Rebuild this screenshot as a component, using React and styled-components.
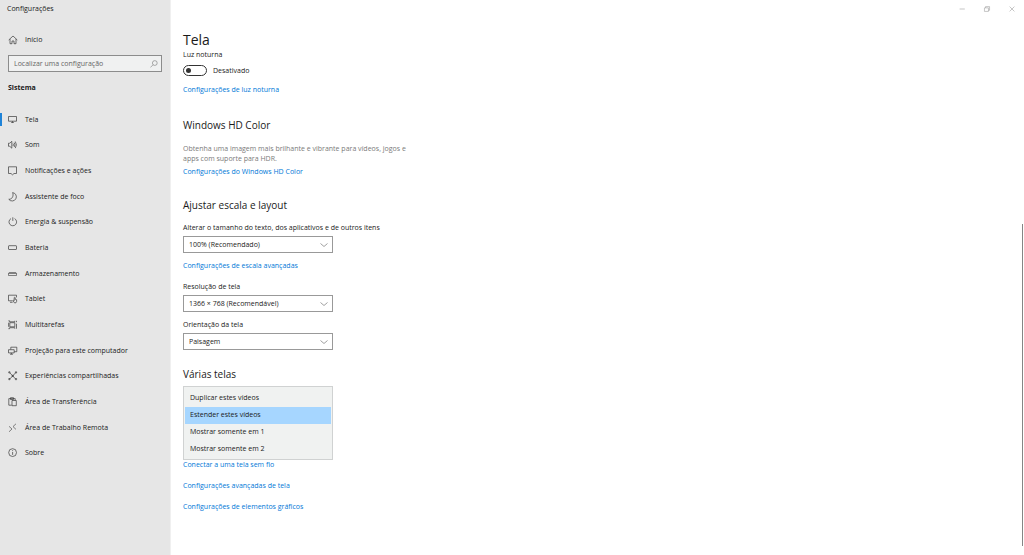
import styled, { createGlobalStyle } from 'styled-components'

const GlobalStyle = createGlobalStyle`
  * {
    box-sizing: border-box;
  }
  body {
    margin: 0;
    background: #fff;
    color: #1a1a1a;
    font-family: 'Open Sans', 'Noto Sans', sans-serif;
    font-size: 7px;
    line-height: 10px;
  }
  button,
  input,
  select {
    font: inherit;
    color: inherit;
    border-radius: 0;
  }
  h1,
  h2,
  p,
  ul {
    margin: 0;
    padding: 0;
    font-weight: 400;
  }
`

const Window = styled.div`
  display: flex;
  min-height: 100vh;
`

const Sidebar = styled.aside`
  flex: 0 0 171px;
  background: #e6e6e6;
  border-right: 1px solid #f0f0f0;
`

const AppName = styled.div`
  padding: 4px 7px;
`

const SidebarLink = styled.a`
  display: flex;
  align-items: center;
  gap: 7px;
  padding-left: 6px;
  border-left: 2px solid ${({ $active }) => ($active ? '#1f83d8' : 'transparent')};
  height: 13px;
  color: inherit;
  text-decoration: none;
  svg {
    flex: none;
    color: #3a3a3a;
  }
`

const HomeRow = styled.div`
  padding: 15px 0 9px;
`

const SearchBox = styled.label`
  display: flex;
  align-items: center;
  height: 17px;
  margin: 0 8px;
  padding: 0 3px 0 5px;
  border: 1px solid #8c8c8c;
  background: #f0f1f1;
  color: #707070;
  input {
    flex: 1;
    min-width: 0;
    padding: 0;
    border: none;
    outline: none;
    background: transparent;
  }
  input::placeholder {
    color: #666;
    opacity: 1;
  }
`

const GroupName = styled.div`
  padding: 11px 8px 14px;
  font-weight: 700;
`

const NavList = styled.ul`
  display: grid;
  grid-auto-rows: 1fr;
  align-items: center;
  height: 359px;
  list-style: none;
`

const Page = styled.div`
  flex: 1;
  display: flex;
  flex-direction: column;
`

const TitleBar = styled.header`
  display: flex;
  justify-content: flex-end;
  height: 18px;
`

const WindowButton = styled.button`
  display: flex;
  align-items: center;
  justify-content: center;
  width: 25px;
  padding: 0;
  border: none;
  background: transparent;
  color: #999;
`

const Body = styled.div`
  flex: 1;
  display: flex;
`

const Main = styled.main`
  flex: 1;
  padding: 11px 12px 20px;
`

const ScrollTrack = styled.div`
  display: flex;
  width: 2px;
  padding: 206px 1px 9px 0;
`

const ScrollThumb = styled.div`
  flex: 1;
  background: #858585;
`

const Title = styled.h1`
  font-size: 14px;
  line-height: 21px;
`

const Section = styled.section`
  display: flex;
  flex-direction: column;
  align-items: flex-start;
  margin-bottom: ${({ $gap }) => $gap || 0}px;
`

const Heading = styled.h2`
  margin-bottom: ${({ $gap }) => $gap}px;
  font-size: 10px;
  line-height: 15px;
`

const Description = styled.p`
  max-width: 230px;
  margin-bottom: 3px;
  color: #7a7a7a;
`

const Link = styled.a`
  color: #0078d7;
  text-decoration: none;
`

const ToggleRow = styled.label`
  display: flex;
  align-items: center;
  gap: 6px;
  margin: 5px 0 9px;
  height: 11px;
`

const Toggle = styled.input`
  appearance: none;
  display: flex;
  align-items: center;
  width: 24px;
  height: 11px;
  margin: 0;
  padding: 0 2px;
  border: 1px solid #333;
  border-radius: 6px;
  &::before {
    content: '';
    width: 5px;
    height: 5px;
    border-radius: 50%;
    background: #333;
  }
  &:checked {
    justify-content: flex-end;
  }
`

const Field = styled.div`
  display: flex;
  flex-direction: column;
  gap: 3px;
  margin-bottom: 8px;
`

const SelectBox = styled.div`
  display: grid;
  grid-template-columns: 1fr 14px;
  align-items: center;
  width: 150px;
  height: 17px;
  select {
    grid-area: 1 / 1 / 2 / 3;
    appearance: none;
    height: 17px;
    padding: 0 16px 0 5px;
    border: 1px solid #999;
    background: #fff;
    outline: none;
  }
  svg {
    grid-area: 1 / 2 / 2 / 3;
    pointer-events: none;
  }
`

const OptionList = styled.select`
  width: 150px;
  height: 74px;
  padding: 3px 1px;
  border: 1px solid #d0d2d2;
  background: #f0f2f1;
  outline: none;
  overflow: hidden;
  scrollbar-width: none;
  option {
    min-height: 17px;
    padding: 3px 5px 4px;
    line-height: 10px;
    color: #1a1a1a;
  }
  option:checked {
    background: #a6d6ff linear-gradient(#a6d6ff, #a6d6ff);
    color: #1a1a1a;
  }
`

const LinkStack = styled.div`
  display: flex;
  flex-direction: column;
  align-items: flex-start;
  gap: 11px;
`

const Icon = ({ children, size = 10 }) => (
  <svg
    width={size}
    height={size}
    viewBox="0 0 10 10"
    fill="none"
    stroke="currentColor"
    strokeWidth="0.7"
    aria-hidden="true"
  >
    {children}
  </svg>
)

const Chevron = () => (
  <Icon>
    <path d="M1.5 3.5 5 6.5 8.5 3.5" stroke="#777" />
  </Icon>
)

const navItems = [
  {
    label: 'Tela',
    active: true,
    icon: <path d="M.5 1.5h8v4.7h-8zM4.5 6.2v1.3M3.2 7.5h2.6" />,
  },
  {
    label: 'Som',
    icon: (
      <path d="M.5 3.2h1.3L3.8 1.3v6.9L1.8 6.3H.5zM5 3.6q.8 1.2 0 2.4M6.2 2.6q1.5 2.2 0 4.4M7.3 1.5q2.2 3.3 0 6.6" />
    ),
  },
  { label: 'Notificações e ações', icon: <path d="M.5.8h8v6.7H6L4.5 8.8 3 7.5H.5z" /> },
  {
    label: 'Assistente de foco',
    icon: <path d="M4.6.6A4.2 4.2 0 1 1 .8 7.3C4 7.5 6 4 4.6.6z" />,
  },
  {
    label: 'Energia & suspensão',
    icon: <path d="M3 1.6A3.8 3.8 0 1 0 6.6 1.6M4.8.3v3.6" />,
  },
  { label: 'Bateria', icon: <rect x=".5" y="2.7" width="8" height="3.8" rx=".5" /> },
  { label: 'Armazenamento', icon: <path d="M1.2 3.5h6.6l.7.9v2.1h-8V4.4zM.5 4.5h8" strokeWidth="0.6" /> },
  {
    label: 'Tablet',
    icon: (
      <path d="M4.3 6.8H.5V1.2h8v2.2M2 8.3h2.6M6.2 6.8V3.6q.5-.6 1 0v1.7l1.4.4v1.8l-.7 1.3H6.4L4.8 6.6q.5-.7 1.4.2" />
    ),
  },
  {
    label: 'Multitarefas',
    icon: <path d="M1.8 2.7h5v4.1h-5zM.4.8h1.2v1h5.2v-1M.4 8.7h1.2v-1h5.2v1M.4 2.7v4.1M8.5.8v1.4M8.5 3.7v5" />,
  },
  {
    label: 'Projeção para este computador',
    icon: <path d="M2.8 3.5V1.2h6v4.5H6.2M.5 3.7h5.7v3.2H.5zM2 8.2h3M3.4 6.9v1.3" />,
  },
  {
    label: 'Experiências compartilhadas',
    icon: (
      <path d="M2 2 7.4 7.8M7.4 2 2 7.8M.8.8H2V2H.8zM7.4.8h1.2V2H7.4zM.8 7.5H2v1.2H.8zM7.4 7.5h1.2v1.2H7.4zM4.1 4.3h1.2v1.2H4.1z" />
    ),
  },
  {
    label: 'Área de Transferência',
    icon: <path d="M3.7 8.2H.8V1.6h6.4v1.7M2.5 2.5V.7h3v1.8zM4 3.5h4.3v5.2H4z" />,
  },
  {
    label: 'Área de Trabalho Remota',
    icon: <path d="M1 3.3 4 6 1 8.8M8 .8 5 3.6 8 6.4" strokeWidth="0.6" />,
  },
  {
    label: 'Sobre',
    icon: (
      <>
        <circle cx="4.6" cy="4.6" r="3.9" />
        <path d="M4.6 4v2.9M4.6 2.2v.9" />
      </>
    ),
  },
]

const SelectField = ({ id, label, value }) => (
  <Field>
    <label htmlFor={id}>{label}</label>
    <SelectBox>
      <select id={id} defaultValue={value}>
        <option>{value}</option>
      </select>
      <Chevron />
    </SelectBox>
  </Field>
)

const App = () => (
  <>
    <GlobalStyle />
    <Window>
      <Sidebar>
        <AppName>Configurações</AppName>
        <HomeRow>
          <SidebarLink href="#inicio">
            <Icon>
              <path d="M.7 5 5 1l4.3 4M2 4v4.7h2V6h2v2.7h2V4" />
            </Icon>
            Início
          </SidebarLink>
        </HomeRow>
        <SearchBox>
          <input type="text" aria-label="Localizar uma configuração" placeholder="Localizar uma configuração" />
          <Icon size={8}>
            <circle cx="6" cy="3.8" r="3" />
            <path d="M3.8 6 .5 9.3" />
          </Icon>
        </SearchBox>
        <GroupName>Sistema</GroupName>
        <nav>
          <NavList>
            {navItems.map(({ label, icon, active }) => (
              <li key={label}>
                <SidebarLink href="#" $active={active}>
                  <Icon>{icon}</Icon>
                  {label}
                </SidebarLink>
              </li>
            ))}
          </NavList>
        </nav>
      </Sidebar>

      <Page>
        <TitleBar>
          <WindowButton aria-label="Minimizar">
            <Icon size={8}>
              <path d="M2 5h6.5" />
            </Icon>
          </WindowButton>
          <WindowButton aria-label="Restaurar">
            <Icon size={8}>
              <path d="M1.8 3.6h5V8h-5zM3.2 3.6V2h5v4.6H6.8" />
            </Icon>
          </WindowButton>
          <WindowButton aria-label="Fechar">
            <Icon size={8}>
              <path d="m2 2 6 6M8 2 2 8" />
            </Icon>
          </WindowButton>
        </TitleBar>
        <Body>
          <Main>
            <Title>Tela</Title>
            <Section $gap={23}>
              <label htmlFor="luz">Luz noturna</label>
              <ToggleRow>
                <Toggle id="luz" type="checkbox" role="switch" />
                Desativado
              </ToggleRow>
              <Link href="#">Configurações de luz noturna</Link>
            </Section>

            <Section $gap={21}>
              <Heading $gap={11}>Windows HD Color</Heading>
              <Description>
                Obtenha uma imagem mais brilhante e vibrante para vídeos, jogos e apps com suporte para HDR.
              </Description>
              <Link href="#">Configurações do Windows HD Color</Link>
            </Section>

            <Section $gap={11}>
              <Heading $gap={10}>Ajustar escala e layout</Heading>
              <SelectField
                id="escala"
                label="Alterar o tamanho do texto, dos aplicativos e de outros itens"
                value="100% (Recomendado)"
              />
              <Link href="#">Configurações de escala avançadas</Link>
            </Section>

            <Section $gap={9}>
              <SelectField id="resolucao" label="Resolução de tela" value="1366 × 768 (Recomendável)" />
              <SelectField id="orientacao" label="Orientação da tela" value="Paisagem" />
            </Section>

            <Section>
              <Heading $gap={4}>Várias telas</Heading>
              <OptionList size={4} defaultValue="Estender estes vídeos" aria-label="Várias telas">
                <option>Duplicar estes vídeos</option>
                <option>Estender estes vídeos</option>
                <option>Mostrar somente em 1</option>
                <option>Mostrar somente em 2</option>
              </OptionList>
              <LinkStack>
                <Link href="#">Conectar a uma tela sem fio</Link>
                <Link href="#">Configurações avançadas de tela</Link>
                <Link href="#">Configurações de elementos gráficos</Link>
              </LinkStack>
            </Section>
          </Main>
          <ScrollTrack>
            <ScrollThumb />
          </ScrollTrack>
        </Body>
      </Page>
    </Window>
  </>
)

export default App
